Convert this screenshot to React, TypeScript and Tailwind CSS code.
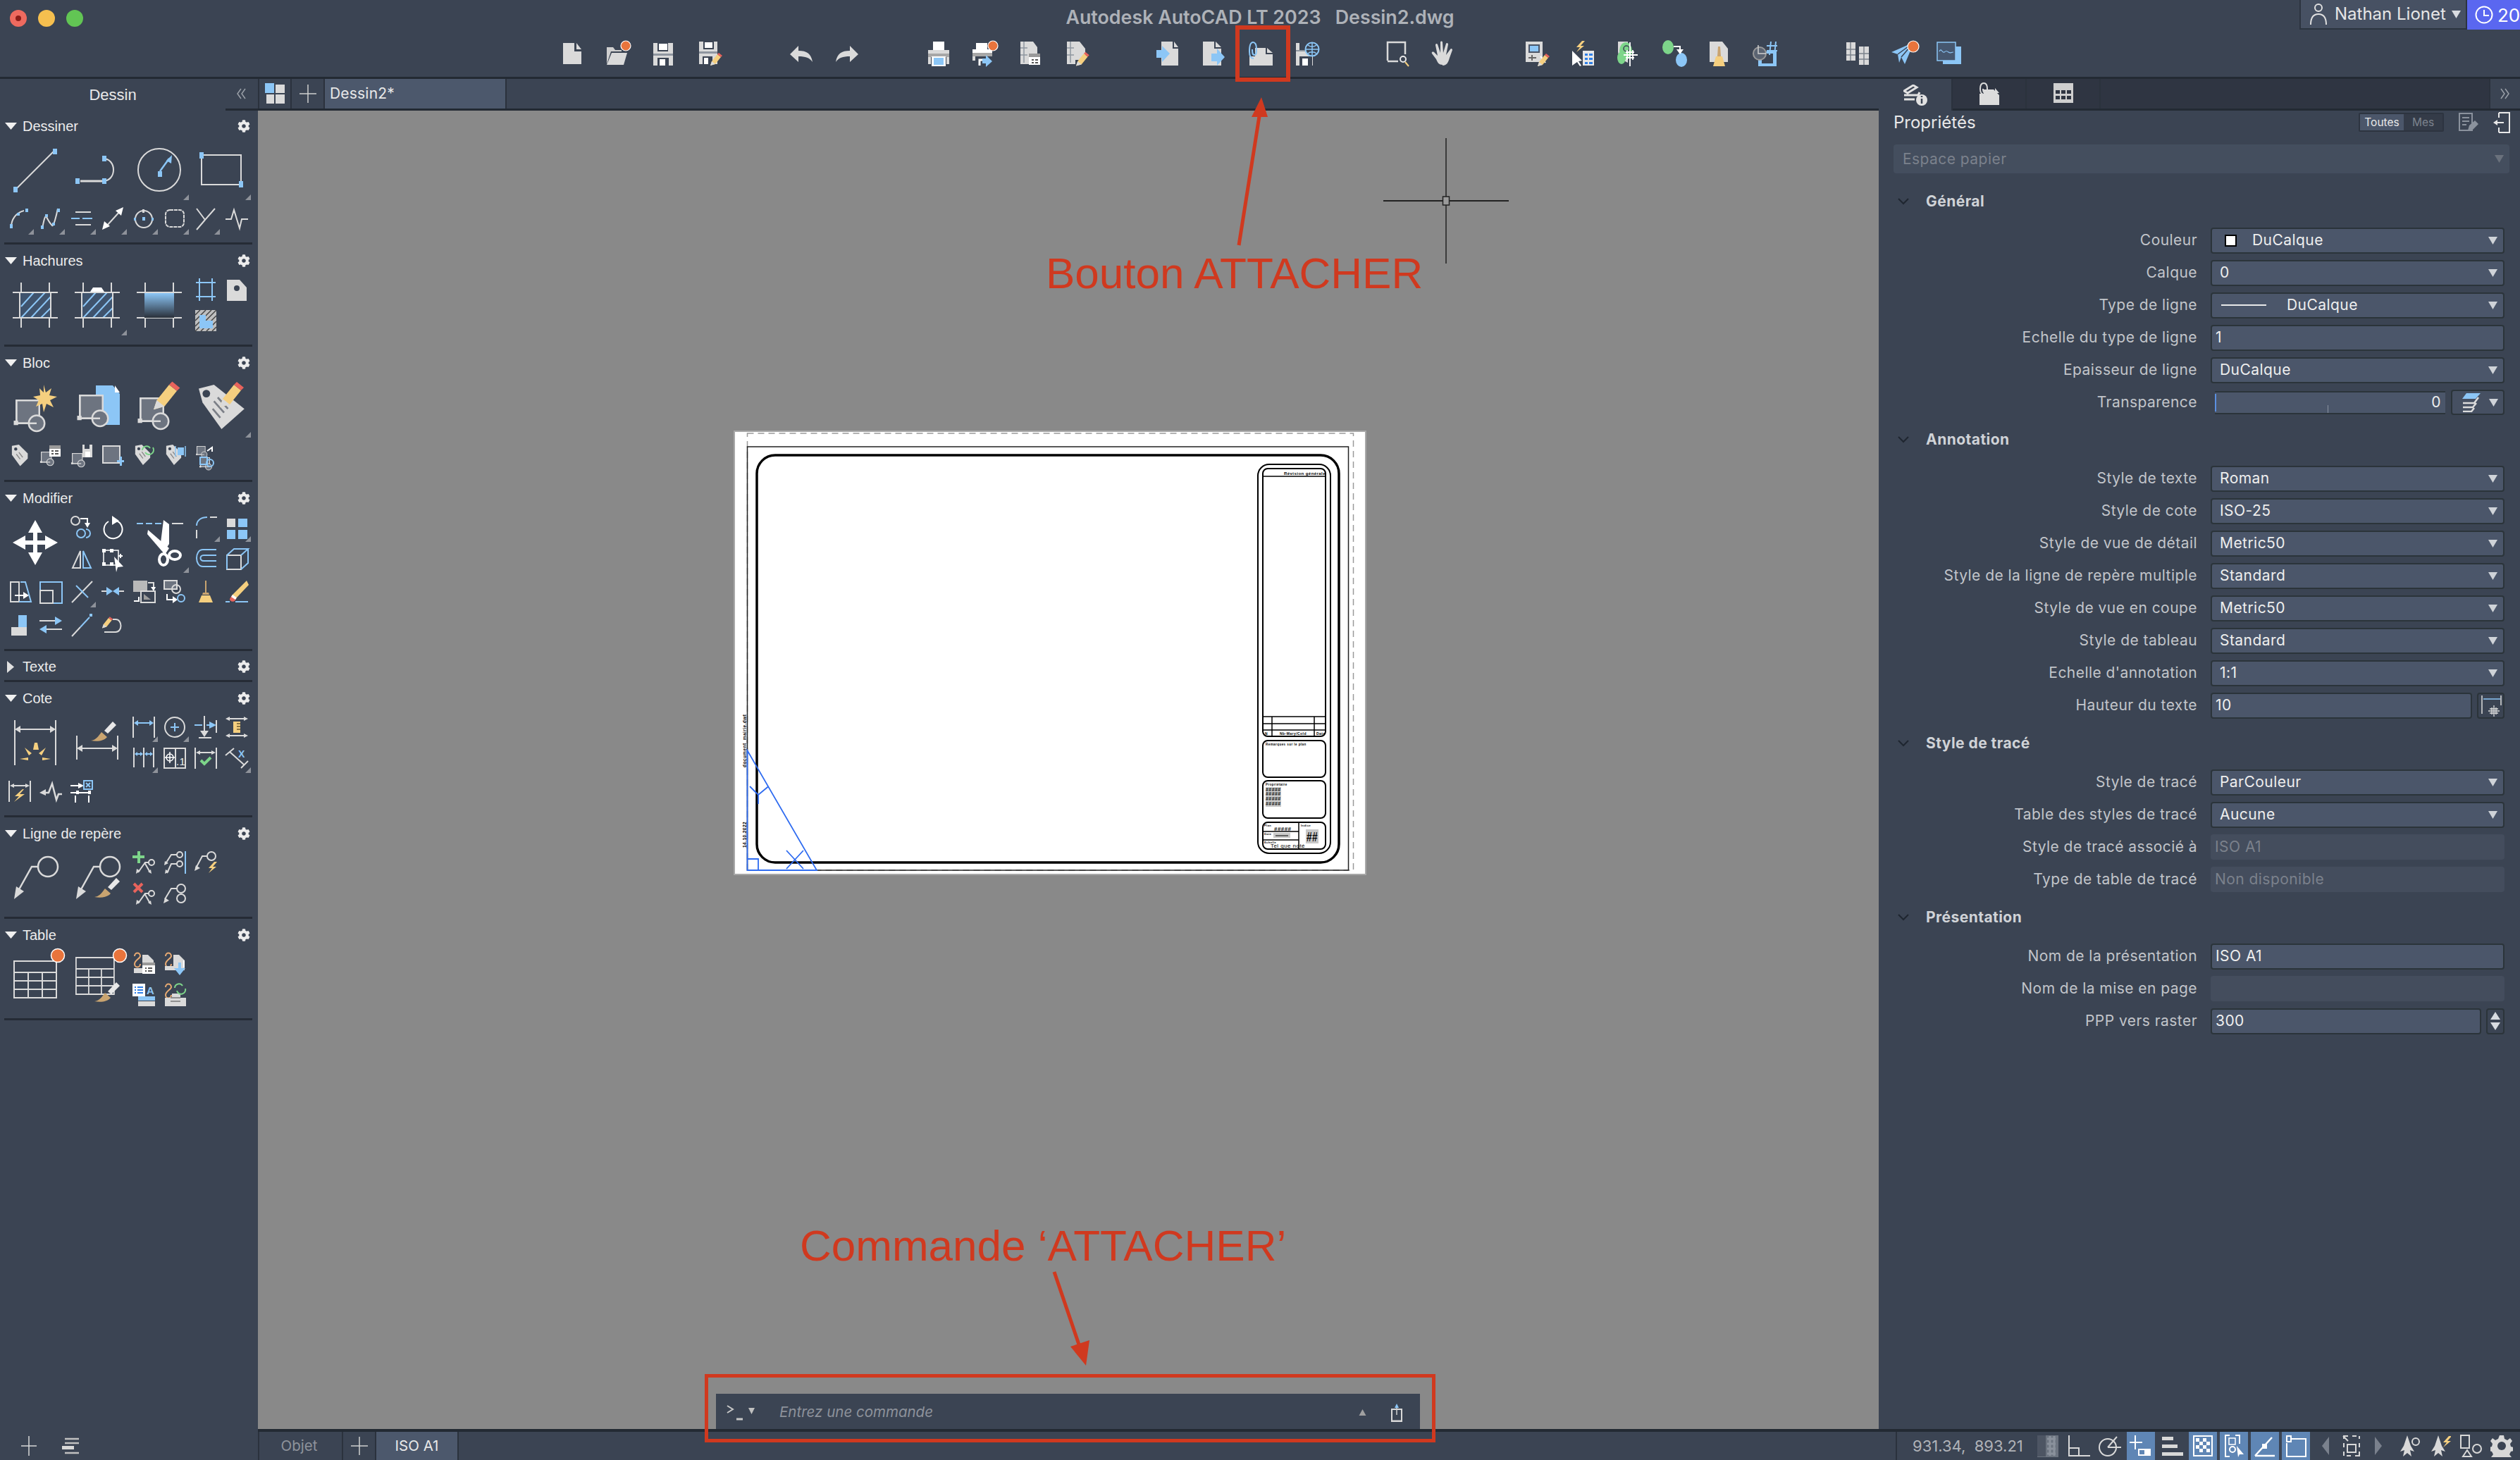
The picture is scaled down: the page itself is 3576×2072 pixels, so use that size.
import React from 'react';
import { FaCog } from 'react-icons/fa';

const G = '#dadada', B = '#8cc6f6', Y = '#f5cf7f', R = '#e8635c', O = '#e8743c', N = '#7dd58a', T = '#c9a470', W = '#ffffff', D = '#6d7480', L = '#2f80e8', BG = '#3b4453';
const p = (d: string, c = G, w = 2) => <path d={d} stroke={c} strokeWidth={w} fill="none" />;
const f = (d: string, c = G) => <path d={d} fill={c} />;
const r = (x: number, y: number, w: number, h: number, c = B) => <rect x={x} y={y} width={w} height={h} fill={c} />;
const c = (x: number, y: number, rad: number, col = G, w = 2) => <circle cx={x} cy={y} r={rad} stroke={col} strokeWidth={w} fill="none" />;
const dot = (x: number, y: number, rad = 6) => <circle cx={x} cy={y} r={rad} fill={O} stroke="#fff" strokeWidth={1.2} />;
const pencil = (x: number, y: number, s = 1) => (
  <g transform={`translate(${x} ${y}) scale(${s})`}>
    <path d="M0 16l2-6L10 0l5 4-8 10z" fill={Y} />
    <path d="M0 16l2-6 5 4z" fill={G} />
    <path d="M10 0l2-2 5 4-2 2z" fill={R} />
  </g>
);
const brush = (x: number, y: number) => (
  <g transform={`translate(${x} ${y})`}>
    <path d="M0 29c8-1 11-7 15-12l8 7c-4 5-13 7-23 5z" fill={T} />
    <path d="M19 15L31 2l5 5-12 12z" fill="#e8e8e8" />
  </g>
);
const bolt = (x: number, y: number, col = Y) => <path transform={`translate(${x} ${y})`} d="M9 0L1 9h5l-5 7 11-9H7l6-7z" fill={col} />;
const tag = (x: number, y: number, s = 1) => (
  <g transform={`translate(${x} ${y}) scale(${s})`}>
    <path d="M1 2L12 0l14 14v8L14 34 1 16z" fill={G} />
    <circle cx="7" cy="7" r="2.500" fill={BG} />
    <path d="M8 15l6 8M12 12l6 8" stroke="#888" strokeWidth="1.500" />
  </g>
);
const blockSq = (x: number, y: number, s = 1) => (
  <g transform={`translate(${x} ${y}) scale(${s})`}>
    <rect x="1" y="1" width="26" height="26" fill="#6d7480" stroke={G} strokeWidth="2" />
    <circle cx="24" cy="27" r="9" fill="#6d7480" stroke={G} strokeWidth="2" />
    <path d="M24 27H1V1" stroke={G} strokeWidth="2" fill="none" />
    <rect x="-2" y="24" width="5" height="5" fill={G} />
  </g>
);
const leader = (x: number, y: number, s = 1) => (
  <g transform={`translate(${x} ${y}) scale(${s})`}>
    <circle cx="48" cy="14" r="14" stroke={G} strokeWidth="2.500" fill="none" />
    <path d="M34 14H25L6 48" stroke={G} strokeWidth="2.500" fill="none" />
    <path d="M0 60l3-18 11 7z" fill={G} />
  </g>
);
const minitbl = (x: number, y: number, sx = 1) => (
  <g transform={`translate(${x} ${y}) scale(${sx} 1)`}>
    <path d="M1 1h60v52H1zM1 17h60M1 29h60M1 41h60M21 17v36M41 17v36" stroke={G} strokeWidth="2" fill="none" />
  </g>
);
const chain = (x: number, y: number) => <path transform={`translate(${x} ${y})`} d="M3 5c0-6 8-6 8 0 0 3-8 6-8 11 0 6 8 6 8 0" stroke="#e8aa72" strokeWidth="2" fill="none" />;

const Ic = ({ s = 32, children }: { s?: number; children: React.ReactNode }) => (
  <svg className="overflow-visible" width={s} height={s} viewBox={`0 0 ${s} ${s}`} fill="none">{children}</svg>
);
const Tb = ({ children }: { children?: React.ReactNode }) => (
  <div className="w-[65.2px] h-[40px] flex items-center justify-center shrink-0">{children ? <Ic s={36}>{children}</Ic> : null}</div>
);

const Tool = ({ big, fly, children }: { big?: boolean; fly?: boolean; children?: React.ReactNode }) => (
  <div className={big ? 'col-span-2 row-span-2 relative flex items-center justify-center' : 'relative flex items-center justify-center'}>
    {children ? <Ic s={big ? 64 : 32}>{children}</Ic> : null}
    {fly ? (
      <svg className="absolute right-[2px] bottom-[1px]" width="8" height="8" viewBox="0 0 8 8"><path d="M8 0v8H0z" fill="#8e929a" /></svg>
    ) : null}
  </div>
);

const Blk = ({ children }: { children: React.ReactNode }) => (
  <div className="grid grid-cols-[repeat(8,44px)] grid-rows-[44px_44px] pl-[6px]">{children}</div>
);
const Rows = ({ children }: { children: React.ReactNode }) => (
  <div className="grid grid-cols-[repeat(8,44px)] auto-rows-[48px] pl-[6px] mt-[1px]">{children}</div>
);

const Section = ({ title, open = true, hd = 'h-[42px]', pb = 'pb-[10px]', children }: { title: string; open?: boolean; hd?: string; pb?: string; children?: React.ReactNode }) => (
  <section className={`${pb} relative shrink-0 border-b-[3px] border-[#252b35] ml-[6px] mr-[8px]`}>
    <div className={`${hd} flex items-center pt-[3px] pl-[1px] pr-[3px] text-[#ececec] text-[20px] tracking-normal font-['Liberation_Sans']`}>
      <span className="w-[25px] flex">
        {open ? (
          <svg width="17" height="10" viewBox="0 0 17 10"><path d="M0 0h17l-8.500 10z" fill="#f0f0f0" /></svg>
        ) : (
          <svg className="ml-[3px]" width="10" height="17" viewBox="0 0 10 17"><path d="M0 0l10 8.500-10 8.500z" fill="#e0e0e0" /></svg>
        )}
      </span>
      <span className="flex-1">{title}</span>
      <FaCog className="text-[#ececec] w-[18px] h-[18px]" />
    </div>
    <div className="-ml-[6px] -mr-[8px]">{children}</div>
  </section>
);

const Caret = ({ c: col = '#cfd3d8' }: { c?: string }) => (
  <svg width="13" height="11" viewBox="0 0 13 11"><path d="M0 0h13L6.500 11z" fill={col} /></svg>
);

const Box = ({ children, cls = 'flex-1', sel }: { children?: React.ReactNode; cls?: string; sel?: boolean }) => (
  <div className={`${cls} h-[37px] flex items-center rounded-[4px] bg-[#4b566a] border-2 border-[#2b343a] text-[#eeeeee] relative`}>
    {children}
    {sel ? <span className="absolute right-[8px] top-[11px] flex"><Caret /></span> : null}
  </div>
);
const Lab = ({ children }: { children: React.ReactNode }) => (
  <div className="w-[471px] pr-[19px] text-right text-[#c2c5ca] shrink-0 whitespace-nowrap">{children}</div>
);
const Row = ({ label, children }: { label: string; children: React.ReactNode }) => (
  <div className="h-[46px] flex items-center pr-[22px]"><Lab>{label}</Lab>{children}</div>
);
const Sel = ({ label, v }: { label: string; v: string }) => (
  <Row label={label}><Box sel><span className="pl-[11px]">{v}</span></Box></Row>
);
const Inp = ({ label, v }: { label: string; v: string }) => (
  <Row label={label}><Box><span className="pl-[5px]">{v}</span></Box></Row>
);
const Dis = ({ label, v }: { label: string; v?: string }) => (
  <Row label={label}>
    <div className="flex-1 h-[36px] flex items-center rounded-[4px] bg-[#444d5d] text-[#7b818c] pl-[6px]">{v}</div>
  </Row>
);
const Head = ({ t, cls = 'mt-[4px]' }: { t: string; cls?: string }) => (
  <div className={`${cls} h-[54px] mb-[5px] flex items-center text-[#d0d3d7] font-bold`}>
    <svg className="ml-[27px] mr-[24px]" width="16" height="10" viewBox="0 0 16 10"><path d="M1 1l7 7 7-7" stroke="#1f2630" strokeWidth="2" fill="none" /></svg>
    {t}
  </div>
);

const St = ({ on, w = 'w-[44px]', children }: { on?: boolean; w?: string; children?: React.ReactNode }) => (
  <div className={`${w} h-[40px] flex items-center justify-center shrink-0`}>
    <div className={on ? 'w-[40px] h-[40px] bg-[#5f86b5] flex items-center justify-center' : 'w-[40px] h-[40px] flex items-center justify-center'}>
      <svg width="32" height="32" viewBox="0 0 32 32" fill="none">{children}</svg>
    </div>
  </div>
);

const F = "Liberation Sans";
const Paper = () => (
  <svg className="absolute left-[677px] top-[456px] shadow-[0_0_0_2px_#a8a8a8]" width="894" height="627" viewBox="0 0 894 627" fill="none">
    <rect width="894" height="627" fill="#ffffff" />
    <rect x="17.500" y="2" width="860" height="620" stroke="#9a9a9a" strokeWidth="1.500" strokeDasharray="9 6" />
    <rect x="17.500" y="21" width="853" height="601" stroke="#222" strokeWidth="1.500" />
    <rect x="31" y="33" width="826" height="578" rx="26" stroke="#000" strokeWidth="3.500" />
    <rect x="742" y="46" width="103" height="552" rx="16" stroke="#000" strokeWidth="2" />
    <rect x="749" y="52" width="89" height="380" rx="7" stroke="#000" strokeWidth="2" />
    <path d="M749 63h89M749 404h89M749 414h89M749 423h89M762 404v28M822 404v28" stroke="#000" strokeWidth="1.500" />
    <text x="779" y="61" fontSize="6" fontWeight="700" fill="#000" fontFamily={F}>Révision générale</text>
    <text x="752" y="430" fontSize="5" fontWeight="700" fill="#000" fontFamily={F}>N</text>
    <text x="773" y="430" fontSize="5" fontWeight="700" fill="#000" fontFamily={F}>Nb-Mary/Cold</text>
    <text x="825" y="430" fontSize="5" fontWeight="700" fill="#000" fontFamily={F}>Date</text>
    <rect x="749" y="438" width="89" height="52" rx="7" stroke="#000" strokeWidth="2" />
    <text x="753" y="445" fontSize="4.500" fontWeight="700" fill="#000" fontFamily={F}>Remarques sur le plan</text>
    <rect x="749" y="495" width="89" height="53" rx="7" stroke="#000" strokeWidth="2" />
    <text x="753" y="502" fontSize="4.500" fontWeight="700" fill="#000" fontFamily={F}>Propriétaire</text>
    <rect x="753" y="504" width="22" height="28" fill="#c8c8c8" />
    <text x="753" y="510" fontSize="7" fontWeight="700" fill="#000" fontFamily={F}>#####</text>
    <text x="753" y="516" fontSize="7" fontWeight="700" fill="#000" fontFamily={F}>#####</text>
    <text x="753" y="523" fontSize="7" fontWeight="700" fill="#000" fontFamily={F}>#####</text>
    <text x="753" y="530" fontSize="7" fontWeight="700" fill="#000" fontFamily={F}>#####</text>
    <rect x="749" y="554" width="89" height="38" rx="7" stroke="#000" strokeWidth="2" />
    <path d="M800 554v38M749 567h51M749 579h51" stroke="#000" strokeWidth="1.500" />
    <text x="751" y="560" fontSize="4" fontWeight="700" fill="#000" fontFamily={F}>Plan</text>
    <text x="765" y="566" fontSize="8" fontWeight="700" fill="#000" fontFamily={F}>#####</text>
    <rect x="764" y="569" width="24" height="7" fill="#c8c8c8" />
    <path d="M767 573h18" stroke="#000" strokeWidth="1" />
    <text x="751" y="572" fontSize="4" fontWeight="700" fill="#000" fontFamily={F}>Date</text>
    <text x="751" y="584" fontSize="4" fontWeight="700" fill="#000" fontFamily={F}>Echelle</text>
    <text x="760" y="590" fontSize="8" fill="#000" fontFamily={F}>Tel que noté</text>
    <text x="803" y="560" fontSize="4" fontWeight="700" fill="#000" fontFamily={F}>Indice</text>
    <rect x="810" y="564" width="18" height="20" fill="#c8c8c8" />
    <text x="811" y="581" fontSize="18" fontWeight="700" fill="#000" fontFamily={F} textLength="16" lengthAdjust="spacingAndGlyphs">##</text>
    <g transform="translate(16 476) rotate(-90)">
      <text x="0" y="0" fontSize="6.500" fontWeight="700" fill="#000" fontFamily={F}>document_mairie.dwt</text>
    </g>
    <g transform="translate(16 590) rotate(-90)">
      <text x="0" y="0" fontSize="6.500" fontWeight="700" fill="#000" fontFamily={F}>14.10.2022</text>
    </g>
    <g stroke="#2e6bf0" strokeWidth="1.800">
      <path d="M17.500 452V622H116Z" />
      <path d="M17.500 606H33V622" />
      <path d="M21 503L33 515L47.500 503M33 515V528" />
      <path d="M73 594L97 620M97 594L73 620" />
    </g>
  </svg>
);

const Cross = () => (
  <div className="absolute left-[1597px] top-[39px] w-[178px] h-[178px] pointer-events-none">
    <svg width="178" height="178" viewBox="0 0 178 178" fill="none">
      <path d="M89 0V178" stroke="#222" strokeWidth="1.500" />
      <path d="M0 89H178" stroke="#222" strokeWidth="2" />
      <rect x="84.500" y="83" width="9" height="12" fill="#9a9a9a" stroke="#222" strokeWidth="1.500" />
    </svg>
  </div>
);

export default function App() {
  return (
    <div className="relative w-[3576px] h-[2072px] overflow-hidden bg-[#3b4453] flex flex-col text-[21px] tracking-[0.45px] font-['Inter','Liberation_Sans',sans-serif]">
      {/* TITLE + TOOLBAR */}
      <header className="h-[112px] shrink-0 border-b-[3px] border-[#232a33]">
        <div className="h-[48px] grid grid-cols-[1fr_auto_1fr]">
          <div className="flex items-start gap-[16px] pl-[14px] pt-[14px]">
            <span className="w-[24px] h-[24px] rounded-full bg-[#ee6a5f] flex items-center justify-center"><span className="w-[8px] h-[8px] rounded-full bg-[#8c1d18]" /></span>
            <span className="w-[24px] h-[24px] rounded-full bg-[#f5bf4f]" />
            <span className="w-[24px] h-[24px] rounded-full bg-[#62c554]" />
          </div>
          <div className="text-[#aeb2b8] text-[26.800px] font-semibold tracking-normal pt-[4px] whitespace-pre">Autodesk AutoCAD LT 2023   Dessin2.dwg</div>
          <div className="flex justify-end items-start">
            <div className="w-[238px] h-[42px] bg-[#475163] border-x-2 border-b-2 border-[#2c3440] flex items-center pl-[12px] text-[#e6e6e6] text-[24px] tracking-normal">
              <svg className="mr-[10px]" width="26" height="32" viewBox="0 0 26 32" fill="none"><circle cx="13" cy="7" r="5" stroke="#e0e0e0" strokeWidth="2" /><path d="M2 31c0-12 5-15 11-15s11 3 11 15" stroke="#e0e0e0" strokeWidth="2" /></svg>
              <span className="flex-1 whitespace-nowrap">Nathan Lionet</span>
              <span className="mr-[7px] flex"><Caret c="#d8dbe0" /></span>
            </div>
            <div className="w-[75px] h-[42px] bg-[#5a67f0] flex items-center pl-[11px] text-white text-[26px] tracking-normal overflow-hidden">
              <svg className="mr-[6px] shrink-0" width="26" height="26" viewBox="0 0 26 26" fill="none"><circle cx="13" cy="13" r="11.500" stroke="#fff" strokeWidth="2" /><path d="M13 6v8h7" stroke="#fff" strokeWidth="2" /></svg>
              20
            </div>
          </div>
        </div>
        <div className="h-[56px] flex items-center pl-[778px]">
          <Tb>{f('M6 3h16v12h10v18H6z')}{f('M25 3l7 9h-7z')}</Tb>
          <Tb>{f('M3 9h9l3 4h9v2H9L3 33z', '#cfcfcf')}{f('M10 17h22l-5 17H3z')}{dot(30, 7, 7)}</Tb>
          <Tb>{f('M4 3h28v32H4z')}{r(10, 3, 15, 12, BG)}{r(4, 18, 28, 3, '#8f96a0')}{r(10, 24, 16, 11, BG)}{r(13, 26, 8, 9, '#fff')}{r(12, 4, 12, 9, '#fff')}</Tb>
          <Tb>{f('M4 1h26v32H4z')}{r(10, 1, 15, 11, BG)}{r(12, 2, 11, 8, '#fff')}{r(4, 15, 26, 3, '#8f96a0')}{r(9, 22, 14, 11, BG)}{r(11, 24, 6, 9, '#fff')}{pencil(20, 19, 1)}</Tb>
          <Tb />
          <Tb>{f('M2 19l12-12v7c12 0 18 4 20 16-4-6-10-8-20-8v8z')}</Tb>
          <Tb>{f('M34 19L22 7v7C10 14 4 18 2 30c4-6 10-8 20-8v8z')}</Tb>
          <Tb />
          <Tb>{r(10, 1, 16, 12, '#fff')}{r(3, 13, 30, 5, G)}{r(3, 18, 30, 5, '#a7a7a7')}{r(3, 23, 4, 10, G)}{r(29, 23, 4, 10, G)}{r(8, 22, 20, 14, '#fff')}{r(11, 24, 14, 10)}</Tb>
          <Tb>{r(6, 3, 16, 9, '#fff')}{r(1, 12, 28, 5, '#fff')}{r(1, 17, 28, 5, '#a7a7a7')}{r(1, 22, 4, 6, G)}{p('M11 35V27h10', W, 3)}{f('M20 20l9 9-9 8v-5h-5v-7h5z', B)}{dot(30, 7, 7)}</Tb>
          <Tb>{f('M4 1h18l6 8v10H16v14H4z')}{p('M9 1v30M4 10h10M4 20h10', '#8f96a0', 1.500)}{r(16, 18, 16, 16, '#fff')}{r(16, 18, 16, 5, '#999')}{r(20, 26, 3, 2, '#555')}{r(25, 26, 4, 2, '#555')}{r(20, 30, 3, 2, '#555')}{r(25, 30, 4, 2, '#555')}</Tb>
          <Tb>{f('M4 1h18l8 10v16H16v6H4z')}{p('M9 1v30M4 10h10M4 20h10', '#8f96a0', 1.500)}{pencil(17, 18, 1.100)}</Tb>
          <Tb />
          <Tb>{f('M8 1h16v10h8v24H8z')}{f('M26 1l6 8h-6z')}{f('M1 13h8V7l11 11-11 12v-6H1z', B)}</Tb>
          <Tb>{f('M2 1h16v10h10v24H2z')}{f('M20 1l8 8h-8z')}{f('M14 18h8v-7l11 12-11 12v-6h-8z', B)}</Tb>
          <Tb>{f('M3 22h8V10h15v9h10v16H3z')}{f('M28 10l8 7h-8z')}{p('M9 25c-5 0-6-4-6-10 0-7 1-13 5-13 4 0 5 4 5 10 0 4 0 8-3 8-3 0-3-4-3-8', B, 2)}</Tb>
          <Tb>{f('M3 3h24v32H3z')}{r(8, 3, 13, 10, BG)}{r(3, 13, 24, 2, '#8f96a0')}{r(8, 22, 18, 13, BG)}{r(12, 25, 8, 10, '#fff')}<circle cx="26" cy="12" r="9.500" fill={BG} stroke={B} strokeWidth="2" />{p('M26 3v18M17 12h18M20 6c3 3 9 3 12 0M20 18c3-3 9-3 12 0', B, 1.500)}</Tb>
          <Tb />
          <Tb>{p('M3 28V2h25v17', G, 2.500)}{p('M3 29h15', G, 2.500)}{c(25, 26, 4, '#e8e8e8', 2)}{p('M28 30l5 6', Y, 2)}</Tb>
          <Tb>{f('M16 34c-5 0-7-3-9-8l-6-8c-1-2 1-3 3-2l5 5L6 6c0-2 2-3 3-1l4 12L13 2c0-2 3-2 3 0l1 15 4-13c1-2 3-1 3 1l-3 15 6-8c1-2 3-1 3 1l-4 11c-2 7-4 11-10 11z', G)}</Tb>
          <Tb />
          <Tb>{f('M3 1h24v29H3z')}{r(7, 5, 16, 12, '#4a5568')}{r(9, 7, 12, 8)}{p('M7 24h11M12 20v8', '#666', 2)}{p('M24 22l7 9', '#fff', 2)}{pencil(20, 20, 1)}</Tb>
          <Tb>{f('M4 14l14 14-5 1 4 6-2 1-4-6-7 5z', '#fff')}{bolt(9, 0)}{r(19, 14, 16, 21, '#e8e8e8')}{r(22, 18, 4, 3, L)}{r(28, 18, 5, 3, L)}{r(22, 24, 4, 3, L)}{r(28, 24, 5, 3, L)}{r(22, 30, 4, 3, L)}{r(28, 30, 5, 3, L)}</Tb>
          <Tb><path d="M4 1h14v30c-8-4-14-8-14-16z" fill={G} /><ellipse cx="15" cy="14" rx="9" ry="12" fill={N} /><ellipse cx="9" cy="24" rx="6" ry="9" fill={N} />{c(16, 11, 4, BG, 1.500)}{p('M21 2v34M12 20h20M15 16h12M15 24h12M17 13v14M25 13v14', '#fff', 1.800)}</Tb>
          <Tb><ellipse cx="10" cy="9" rx="8" ry="10" fill={N} /><ellipse cx="29" cy="27" rx="8" ry="10" fill={B} />{p('M18 8h9v6', '#fff', 2)}{f('M22 12h10l-5 7z', '#fff')}</Tb>
          <Tb>{f('M4 1h18l8 10v19H4z')}{f('M16 8h3l1 14h-5z', T)}{f('M13 22h9l4 14H9z', Y)}</Tb>
          <Tb>{r(8, 15, 26, 21)}{r(13, 18, 16, 14, BG)}<circle cx="10" cy="18" r="9" fill="#5b6472" stroke="#999" strokeWidth="2" />{p('M19 18H8V6', '#d0d0d0', 1.500)}{p('M26 1l-2 19M33 1l-2 19M20 7h15M20 14h15', B, 2)}</Tb>
          <Tb />
          <Tb>{f('M2 2h13v26H2z')}{f('M20 8h14v26H20z')}{p('M8 2v26M2 12h13M2 20h13M27 8v26M20 18h14M20 26h14', '#7c828c', 1.500)}</Tb>
          <Tb>{f('M1 16L33 2 20 33l-5-10-3 8-2-12z', B)}{p('M10 19L33 2M15 23L33 2', BG, 1.500)}{dot(32, 8, 8)}</Tb>
          <Tb>{r(9, 8, 26, 25)}{r(1, 2, 26, 26, '#46576f')}{p('M1 2h26v26H1z', B, 1.500)}{p('M4 15c3-6 4 3 7 1s3-2 6 0 3 0 7 0', B, 1.200)}</Tb>
        </div>
      </header>

      <div className="flex-1 flex min-h-0">
        {/* LEFT PANEL */}
        <aside className="w-[366px] shrink-0 flex flex-col relative">
          <div className="h-[45px] shrink-0 relative flex items-center justify-center pr-[46px] text-[#e8e8e8] text-[22px] tracking-normal font-['Liberation_Sans']">
            <span>Dessin</span>
            <span className="absolute right-[17px] top-[12px] flex">
              <svg width="14" height="18" viewBox="0 0 14 18" fill="none"><path d="M7 2L2 9l5 7M13 2L8 9l5 7" stroke="#9aa0a8" strokeWidth="1.500" /></svg>
            </span>
            <span className="absolute right-0 bottom-0 w-[46px] h-[3px] bg-[#232a33]" />
          </div>

          <Section title="Dessiner" hd="h-[40px]" pb="pb-[10px]">
            <Blk>
              <Tool big>{p('M4 60L58 6')}{r(1, 56, 6, 8)}{r(57, 2, 6, 8)}</Tool>
              <Tool big>{p('M8 48h32', G, 3)}{p('M40 16c20 0 20 32 0 32')}{r(1, 44, 6, 8)}{r(39, 12, 6, 8)}{r(39, 44, 6, 8)}</Tool>
              <Tool big fly>{c(32, 32, 30)}{r(30, 34, 6, 8)}{p('M33 34l13-18', B, 2.500)}{f('M50 11l-1 12-7-4z', B)}</Tool>
              <Tool big fly>{p('M4 11h56v42H4z')}{r(1, 7, 6, 9)}{r(57, 48, 6, 9)}</Tool>
            </Blk>
            <Rows>
              <Tool fly>{p('M4 28C4 18 10 8 22 5', G, 2)}{r(2, 24, 4, 6)}{r(12, 8, 4, 4)}{r(24, 2, 4, 5)}</Tool>
              <Tool fly>{p('M4 30C6 20 8 10 10 14s6 10 8 12 6-14 8-24')}{r(2, 26, 4, 5)}{r(8, 10, 4, 4)}{r(18, 22, 4, 4)}{r(25, 2, 4, 5)}</Tool>
              <Tool fly>{p('M7 7h22', G)}{p('M1 16h12M17 16h14', B)}{p('M7 25h22')}</Tool>
              <Tool fly>{p('M7 27L27 5')}{f('M1 32l3-12 8 7z', '#fff')}{f('M31 0l-3 12-8-7z', '#fff')}</Tool>
              <Tool fly>{c(16, 17, 12)}{r(13, 9, 6, 4, BG)}{r(14, 14, 4, 5, B)}{r(14, 3, 3, 5, G)}{r(2, 15, 3, 4, B)}{r(27, 15, 3, 4, B)}</Tool>
              <Tool fly><rect x="3" y="4" width="26" height="24" rx="6" stroke={G} strokeWidth="2" strokeDasharray="5 1" /></Tool>
              <Tool fly>{p('M3 2l12 16L29 2M15 18L3 32')}</Tool>
              <Tool>{p('M0 17h8l4-13 8 26 3-13h9')}</Tool>
            </Rows>
          </Section>

          <Section title="Hachures" pb="pb-[12px]">
            <Blk>
              <Tool big>{p('M0 14h64M0 50h64M12 0v64M52 0v64')}{r(10, 14, 44, 36, '#3f536d')}{p('M12 34l18-20M12 50L46 14M26 50L54 20M40 50l14-14', B, 2)}{p('M10 14h44v36H10z')}</Tool>
              <Tool big fly>{p('M0 14h64M0 50h64M12 0v64M52 0v64')}{r(10, 14, 44, 36, '#3f536d')}{p('M12 34l18-20M12 50L46 14M26 50L54 20M40 50l14-14', B, 2)}{p('M10 14h44v36H10z')}{f('M22 13l4-6h12l4 6z', '#fff')}</Tool>
              <Tool big>{p('M0 14h64M0 50h64M12 0v64M52 0v64')}<linearGradient id="gr1" x1="0" y1="0" x2="0" y2="1"><stop offset="0" stopColor="#8cc6f6" /><stop offset="1" stopColor="#2a303a" /></linearGradient><rect x="11" y="15" width="42" height="35" fill="url(#gr1)" /></Tool>
              <Tool>{p('M7 0v32M25 0v32M2 6h28M2 26h28', B)}{p('M7 6h18v20H7z', B)}</Tool>
              <Tool>{f('M2 2h18l10 11v19H2z')}<circle cx="16" cy="14" r="4" fill={BG} /></Tool>
              <Tool>{r(1, 1, 30, 30, '#bfbfbf')}{p('M1 8L8 1M1 16L16 1M1 24L24 1M1 31L31 1M9 31L31 9M17 31L31 17M25 31l6-6', '#444', 1.500)}{f('M7 8h9v8h10v11H7z', B)}</Tool>
            </Blk>
          </Section>

          <Section title="Bloc">
            <Blk>
              <Tool big>{blockSq(4, 21, 1.250)}{f('M44 0l3 11 8-6-3 10 11 2-10 5 5 10-10-5-4 12-2-12-9 4 4-9-8-5 10-2-1-10 6 6z', Y)}</Tool>
              <Tool big>{f('M30 1h24l10 12v44H30z', B)}{f('M57 1l7 10h-7z', '#fff')}{blockSq(6, 14, 1.250)}</Tool>
              <Tool big>{blockSq(4, 18, 1.250)}{pencil(24, 0, 2.200)}</Tool>
              <Tool big fly><g transform="scale(1.800)">{f('M0 3L12 0l24 19-18 16L3 14z')}<circle cx="6" cy="7" r="3" fill={BG} />{p('M12 13l8 9M15 10l8 9M11 19l6 7', '#7b7f87', 1.500)}</g>{pencil(30, 0, 2)}</Tool>
            </Blk>
            <Rows>
              <Tool>{tag(4, 0, 0.900)}</Tool>
              <Tool>{blockSq(2, 10, 0.550)}{r(14, 1, 16, 16, '#fff')}{r(14, 1, 16, 5, '#999')}{r(17, 8, 3, 2, '#555')}{r(22, 8, 5, 2, '#555')}{r(17, 12, 3, 2, '#555')}{r(22, 12, 5, 2, '#555')}</Tool>
              <Tool>{blockSq(2, 12, 0.550)}{r(17, 0, 14, 18, G)}{r(20, 0, 7, 6, BG)}{r(21, 10, 7, 8, '#fff')}</Tool>
              <Tool>{r(2, 2, 24, 24, D)}{p('M2 2h24v24H2z')}{f('M22 22h4v-5h3v5h3v3h-3v5h-3v-5h-4z', B)}</Tool>
              <Tool>{tag(3, 0, 0.850)}{p('M14 8a6 6 0 0 1 11-3M29 4a6 6 0 0 1-11 7', N, 2)}</Tool>
              <Tool>{tag(3, 0, 0.850)}{r(20, 4, 9, 11)}{p('M17 2v15M31 2v15', B, 1.500)}</Tool>
              <Tool>{blockSq(3, 2, 0.450)}{p('M18 9l7-5v6', W, 2)}{blockSq(8, 18, 0.500)}{c(22, 26, 5, B)}{p('M8 18h10v10H8z', B)}</Tool>
            </Rows>
          </Section>

          <Section title="Modifier">
            <Blk>
              <Tool big>{f('M32 0l10 18h-7v11h11v-7l18 10-18 10v-7H35v11h7L32 64 22 46h7V35H18v7L0 32l18-10v7h11V18h-7z', W)}</Tool>
              <Tool>{c(7, 7, 6)}{p('M14 4h10v6', W, 2)}{f('M20 10h8l-4 7z', W)}{c(15, 25, 6, B, 2)}{p('M22 19a6 6 0 0 1 0 12', B)}</Tool>
              <Tool>{p('M21 7a13 13 0 1 1-11 1', W, 2)}{f('M15 0l10 7-10 6z', W)}</Tool>
              <Tool big fly>{p('M0 5h9M13 5h9M26 5h9', B)}{p('M50 5h16')}{f('M38 0l8 6v28l-4 6-8-8z', W)}{f('M16 14l30 26-6 9L15 20z', W)}<ellipse cx="38" cy="56" rx="6" ry="8" fill="none" stroke="#fff" strokeWidth="4" /><ellipse cx="54" cy="50" rx="8" ry="6" fill="none" stroke="#fff" strokeWidth="4" /></Tool>
              <Tool fly>{p('M3 32V20')}{p('M3 14C3 6 10 2 18 2', B)}{p('M22 2h10')}</Tool>
              <Tool fly>{r(2, 4, 12, 12, G)}{r(18, 4, 13, 12)}{r(2, 20, 12, 13)}{r(18, 20, 13, 13)}</Tool>
              <Tool>{p('M14 6L3 30h11z')}{p('M18 6l11 24H18z', B)}</Tool>
              <Tool>{p('M3 5h21v21H3z', W, 1.500)}{r(1, 3, 5, 5, W)}{r(12, 3, 5, 5, W)}{r(1, 22, 5, 5, W)}{r(12, 22, 5, 5, W)}{f('M18 14l13 14-8 1-2 7z', W)}{p('M27 10v6M24 13h6', W, 2)}</Tool>
              <Tool>{p('M31 4H12C0 4 0 28 12 28h19M31 12H13c-6 0-6 8 0 8h18', B)}</Tool>
              <Tool>{p('M2 12h20v20H2z')}{p('M2 12l10-9h20l-10 9M32 3v20l-10 9', B)}{p('M2 12v20', B)}</Tool>
            </Blk>
            <Rows>
              <Tool>{p('M3 3h12v28H3z')}{p('M17 3h7l8 28H15', B)}{p('M9 22h15', W)}{f('M21 17l8 5-8 5z', W)}</Tool>
              <Tool>{p('M1 15V3h31v30H20', B)}{p('M1 15h18v18H1z')}</Tool>
              <Tool fly>{p('M2 32L31 2')}{p('M8 8l17 17', B)}</Tool>
              <Tool>{p('M0 16h7M25 16h7')}{f('M7 10l9 6-9 6z', B)}{f('M25 10l-9 6 9 6z', B)}{p('M7 16h3M22 16h3', B)}</Tool>
              <Tool>{r(1, 1, 20, 16, '#b9b9b9')}{p('M22 4h8v6')}{f('M26 10h7l-3 6z', W)}{p('M12 16h20v16H12z')}{f('M16 28V20l10 8z', '#9c9c9c')}{p('M2 30h7v-6', W)}</Tool>
              <Tool>{r(1, 1, 18, 12, D)}{p('M1 1h18v12H1z')}{c(18, 13, 6)}{p('M5 20v8h9', W, 2)}{f('M13 23l7 5-7 5z', W)}{c(25, 26, 5, B)}</Tool>
              <Tool>{f('M15 1h2v18h-2z', T)}{f('M12 18h8l1 3H11z', T)}{f('M10 22h12l4 10H6z', Y)}</Tool>
              <Tool>{f('M30 1l3 6-17 18-7-3z', Y)}{f('M9 22l7 3-3 5c-3 2-7 0-7-3z', R)}{f('M10 21l6 4-2 3-6-4z', W)}{p('M0 31h6M14 31h18', B)}</Tool>
              <Tool>{r(14, 2, 12, 17)}{r(4, 19, 22, 12, G)}</Tool>
              <Tool>{p('M0 10h24')}{f('M22 4l10 6-10 6z', B)}{p('M8 22h24')}{f('M10 16L0 22l10 6z', B)}</Tool>
              <Tool>{p('M2 32l12-13', G)}{p('M14 19L27 5', B)}{r(27, 0, 4, 4)}</Tool>
              <Tool>{pencil(1, 6, 0.900)}{p('M4 26h16c10 0 10-18 0-18h-4')}</Tool>
            </Rows>
          </Section>

          <Section title="Texte" open={false} hd="h-[41px]" pb="pb-0" />

          <Section title="Cote">
            <Blk>
              <Tool big>{p('M3 0v64M61 0v64M6 13h52')}{f('M3 13l8-5v10zM61 13l-8-5v10z')}{f('M31 32h4l2 10h-8z', Y)}{f('M17 39l10 8-4 3zM47 39l-10 8 4 3z', Y)}{f('M10 55l12-2v4zM54 55l-12-2v4z', Y)}</Tool>
              <Tool big>{p('M3 22v34M61 22v34M6 40h52')}{f('M3 40l8-5v10zM61 40l-8-5v10z')}{brush(23, 0)}</Tool>
              <Tool fly>{p('M1 1v30M31 1v30')}{p('M4 10h24', B)}{f('M2 10l6-4v8zM30 10l-6-4v8z', B)}</Tool>
              <Tool fly>{c(16, 16, 14, G, 2)}{p('M16 10v12M10 16h12', B)}</Tool>
              <Tool>{p('M14 0v22M6 31h18M31 6v18')}{p('M0 13h11', B)}{f('M31 13l-10-5v10z', B)}{p('M17 13h6', B)}{f('M14 30l-6-9h12z', G)}</Tool>
              <Tool>{p('M2 4h28M2 28h28')}{f('M0 4l6-3v6zM32 4l-6-3v6zM0 28l6-3v6zM32 28l-6-3v6z')}{r(11, 8, 10, 16, Y)}{p('M16 11h5M16 15h5M16 19h5', '#6b5a2e', 1.500)}</Tool>
              <Tool fly>{p('M2 1v28M16 1v28M30 1v28')}{p('M4 10h10M18 10h10', B)}{f('M3 10l4-3v6zM15 10l-4-3v6zM17 10l4-3v6zM29 10l-4-3v6z', B)}</Tool>
              <Tool>{p('M1 2h30v28H1zM17 2v28')}{c(9, 15, 5, W, 1.500)}{p('M9 7v16M2 15h14', W, 1.500)}<text x="18" y="26" fontSize="15" fill="#eee" fontFamily="Liberation Sans">.1</text></Tool>
              <Tool>{p('M1 1v30M31 1v30M4 8h24')}{f('M2 8l6-3v6zM30 8l-6-3v6z')}{p('M9 19l5 5 9-9', N, 4)}</Tool>
              <Tool fly>{p('M0 12L12 2M22 30L32 20M6 7l20 18')}<text x="18" y="15" fontSize="14" fontWeight="700" fill={B} fontFamily="Liberation Sans">X</text></Tool>
            </Blk>
            <Rows>
              <Tool>{p('M1 1v30M31 1v30M4 8h24')}{f('M2 8l6-3v6zM30 8l-6-3v6z')}{f('M20 13l-11 10h6l-7 8 15-11h-7l6-7z', Y)}</Tool>
              <Tool>{f('M0 18l9-5v9z')}{p('M8 18h5l5-13 6 23 3-8h5', G, 2.500)}</Tool>
              <Tool>{p('M0 8h12', W)}{f('M11 4l8 4-8 4z', W)}{p('M19 1h12v12H19z', B)}{p('M22 4l6 6M28 4l-6 6', B)}{p('M0 18h8M12 18h14', W, 2)}{r(8, 15, 4, 5, W)}{r(25, 15, 4, 5, W)}{p('M7 22v10', W)}{p('M26 22v10', W)}</Tool>
            </Rows>
          </Section>

          <Section title="Ligne de repère" pb="pb-[11px]">
            <Blk>
              <Tool big>{leader(2, 2)}</Tool>
              <Tool big>{leader(2, 2)}{brush(28, 30)}</Tool>
              <Tool>{f('M7 0h4v6h6v4h-6v7H7v-7H0V6h7z', N)}{c(27, 16, 4)}{p('M23 16h-5L8 30M17 16l8 14')}{f('M5 32l1-7 5 3zM27 32l-5-3 4-3z')}</Tool>
              <Tool>{c(23, 5, 4)}{c(23, 18, 4)}{p('M19 5h-8L4 16M19 18h-8L5 31')}{f('M1 20l1-6 5 3zM2 32l1-6 5 3z')}{p('M31 0v32', B)}</Tool>
              <Tool>{c(24, 7, 6)}{p('M18 7h-7L2 24')}{f('M0 28l2-8 6 4z')}{bolt(19, 15)}</Tool>
              <div />
              <Tool>{p('M2 2l12 12M14 2L2 14', R, 4)}{c(27, 16, 4)}{p('M23 16h-5L8 30M17 16l8 14')}{f('M5 32l1-7 5 3zM27 32l-5-3 4-3z')}</Tool>
              <Tool>{c(25, 9, 6)}{c(25, 23, 6)}{p('M19 9h-8L2 24')}{f('M0 30l2-8 6 4z')}</Tool>
            </Blk>
          </Section>

          <Section title="Table" pb="pb-[11px]">
            <Blk>
              <Tool big>{minitbl(1, 5)}<circle cx="64" cy="-2" r="9.500" fill={O} stroke="#fff" strokeWidth="1.500" /></Tool>
              <Tool big>{minitbl(1, 0, 0.900)}{brush(28, 34)}<circle cx="64" cy="-2" r="9.500" fill={O} stroke="#fff" strokeWidth="1.500" /></Tool>
              <Tool>{chain(0, 0)}{f('M14 3h8l8 8v18H2V22h12z')}{r(14, 14, 18, 16, '#fff')}{r(14, 14, 18, 4, '#999')}{r(18, 21, 2, 2, '#555')}{r(22, 21, 6, 2, '#555')}{r(18, 25, 2, 2, '#555')}{r(22, 25, 6, 2, '#555')}</Tool>
              <Tool>{chain(0, 0)}{f('M14 3h8l8 8v14H2v-6h12z')}{r(21, 14, 4, 8, B)}{f('M15 22h16l-8 10z', B)}{p('M29 11v10', W)}</Tool>
              <div /><div />
              <Tool>{r(0, 0, 18, 18, '#fff')}{r(3, 4, 2, 2, L)}{r(7, 4, 8, 2, L)}{r(3, 8, 2, 2, L)}{r(7, 8, 8, 2, L)}{r(3, 12, 2, 2, L)}{r(7, 12, 8, 2, L)}<text x="20" y="15" fontSize="15" fontWeight="700" fill={B} fontFamily="Liberation Sans">A</text>{r(8, 18, 24, 6)}{r(8, 25, 24, 7, G)}</Tool>
              <Tool>{chain(0, 0)}{f('M6 20h6v-6h12v6h8v12H2v-12z')}{p('M10 20h14M10 25h14', '#8f8f8f', 2)}{p('M16 6a6 6 0 0 1 11-3M31 7a6 6 0 0 1-12 3', N, 2)}</Tool>
            </Blk>
          </Section>

          <div className="flex-1" />
          <div className="h-[40px] shrink-0 flex items-center pl-[30px] gap-[34px]">
            <svg width="22" height="28" viewBox="0 0 22 28" fill="none"><path d="M11 0v28M0 14h22" stroke="#d8d8d8" strokeWidth="1.500" /></svg>
            <svg width="26" height="24" viewBox="0 0 26 24" fill="none"><path d="M6 2h20M6 8h20M6 22h20" stroke="#c0c0c0" strokeWidth="2.500" /><rect x="2" y="12" width="17" height="5" fill="#d8d8d8" /></svg>
          </div>
        </aside>

        {/* CENTER + RIGHT + STATUS */}
        <div className="flex-1 min-w-0 flex flex-col">
          <div className="flex-1 flex min-h-0">
            <main className="w-[2300px] shrink-0 flex flex-col">
              <div className="h-[45px] shrink-0 flex border-b-[3px] border-[#232a33]">
                <div className="w-[48px] border-x-2 border-[#2b323d] flex items-center justify-center">
                  <svg width="28" height="30" viewBox="0 0 28 30"><rect width="13" height="14" fill={B} /><rect x="15" y="2" width="13" height="12" fill={G} /><rect x="2" y="16" width="11" height="13" fill={G} /><rect x="15" y="16" width="13" height="13" fill={G} /></svg>
                </div>
                <div className="w-[47px] border-r-2 border-[#2b323d] flex items-center justify-center">
                  <svg width="24" height="26" viewBox="0 0 24 26" fill="none"><path d="M12 0v26M0 13h24" stroke="#d0d0d0" strokeWidth="1.500" /></svg>
                </div>
                <div className="w-[258px] bg-[#4c586c] border-r-2 border-[#2b323d] flex items-center pl-[7px] text-[#e8e8e8] text-[21px] pb-[1px] tracking-[0.2px]">Dessin2*</div>
              </div>
              <div className="flex-1 relative bg-[#898989] min-h-0">
                <Paper />
                <Cross />
                <div className="absolute left-[650px] bottom-0 w-[999px] h-[50px] bg-[#3b4453] flex items-center pl-[14px] pr-[21px] pt-[3px] text-[#8d929b] text-[20.500px] italic tracking-normal">
                  <svg className="mr-[34px]" width="42" height="26" viewBox="0 0 42 26" fill="none"><path d="M2 3l8 5-8 5" stroke="#c8c8c8" strokeWidth="2" /><path d="M15 22h9" stroke="#c8c8c8" strokeWidth="3" /><path d="M32 6h9l-4.500 9z" fill="#c0c0c0" /></svg>
                  <span className="flex-1">Entrez une commande</span>
                  <svg className="mr-[31px]" width="11" height="11" viewBox="0 0 11 11"><path d="M5.500 1l5 9H.5z" fill="#a0a0a0" /></svg>
                  <svg width="24" height="26" viewBox="0 0 24 26" fill="none"><path d="M5 8h14v17H5z" stroke="#d8d8d8" strokeWidth="2" /><path d="M12 4v12" stroke="#d0d0d0" strokeWidth="1.500" /><path d="M12 0l3 6H9z" fill={B} /><path d="M4 25h16" stroke="#d8d8d8" strokeWidth="3" /></svg>
                </div>
              </div>
            </main>

            <aside className="flex-1 min-w-0 flex flex-col">
              <div className="h-[45px] shrink-0 flex bg-[#2f3542] border-b-[3px] border-[#232a33] relative">
                <div className="w-[105px] h-[45px] bg-[#3b4453] border-r-2 border-[#2b323d] flex items-center justify-center">
                  <svg width="34" height="30" viewBox="0 0 34 30" fill="none"><path d="M1 9L14 1l5 3L6 12zM1 15h20l2-4M1 21h15" stroke="#e2e2e2" strokeWidth="3" /><circle cx="26" cy="22" r="8" fill="#e2e2e2" /><path d="M26 20v7M26 16v2" stroke="#3b4453" strokeWidth="2.500" /></svg>
                </div>
                <div className="w-[105px] border-r-2 border-[#2b323d] flex items-center justify-center">
                  <svg width="32" height="32" viewBox="0 0 32 32" fill="none"><path d="M2 16h6V10h14l8 8v14H2z" fill="#dcdcdc" /><path d="M24 8l6 7h-6z" fill="#dcdcdc" /><path d="M9 17c-5 0-6-3-6-8s1-8 5-8 5 3 5 8c0 3-1 6-3 6s-3-3-3-6" stroke="#dcdcdc" strokeWidth="2" /></svg>
                </div>
                <div className="w-[105px] border-r-2 border-[#2b323d] flex items-center justify-center">
                  <svg width="28" height="30" viewBox="0 0 28 30" fill="none"><rect width="28" height="28" fill="#cfcfcf" /><path d="M3 10h6v5H3zM11 10h6v5h-6zM19 10h6v5h-6zM3 18h6v5H3zM11 18h6v5h-6zM19 18h6v5h-6z" fill="#2f3542" /></svg>
                </div>
                <div className="flex-1" />
                <div className="w-[44px] bg-[#3b4453] border-l-2 border-[#2b323d] flex items-center justify-center">
                  <svg width="14" height="18" viewBox="0 0 14 18" fill="none"><path d="M1 2l5 7-5 7M7 2l5 7-5 7" stroke="#9aa0a8" strokeWidth="1.500" /></svg>
                </div>
              </div>

              <div className="h-[33px] shrink-0 flex items-center pl-[21px] pr-[14px]">
                <span className="flex-1 text-[#e8e8e8] text-[24px] tracking-normal">Propriétés</span>
                <div className="w-[121px] h-[27px] flex rounded-[2px] bg-[#343b48] border-2 border-[#2d3440] text-[15.500px] tracking-normal mr-[20px]">
                  <span className="w-[62px] bg-[#4b566a] flex items-center justify-center text-[#e8e8e8]">Toutes</span>
                  <span className="flex-1 flex items-center justify-center text-[#7d838e]">Mes</span>
                </div>
                <svg className="mr-[20px]" width="30" height="30" viewBox="0 0 30 30" fill="none"><path d="M2 2h18v24H2z" stroke="#8b929d" strokeWidth="2" /><path d="M6 8h10M6 13h10M6 18h6" stroke="#8b929d" strokeWidth="2" /><path d="M14 26l2-7 8-7 5 5-8 8z" fill="#8b929d" /></svg>
                <svg width="24" height="30" viewBox="0 0 24 30" fill="none"><path d="M8 1h15v28H8M8 1v7M8 22v7" stroke="#e8e8e8" strokeWidth="2" /><path d="M4 15h11" stroke="#e8e8e8" strokeWidth="2" /><path d="M0 15l6-4v8z" fill="#e8e8e8" /></svg>
              </div>

              <div className="mt-[15px] ml-[21px] mr-[15px] h-[41px] shrink-0 bg-[#444e5e] rounded-[4px] flex items-center pl-[13px] pr-[8px] text-[#7b818c]">
                <span className="flex-1">Espace papier</span>
                <Caret c="#6a717c" />
              </div>

              <div className="mt-[13px]">
                <Head t="Général" cls="" />
                <Row label="Couleur"><Box sel><span className="ml-[18px] mr-[22px] w-[17px] h-[17px] bg-white border-2 border-black" />DuCalque</Box></Row>
                <Sel label="Calque" v="0" />
                <Row label="Type de ligne"><Box sel><span className="ml-[13px] mr-[29px] w-[64px] h-[2px] bg-[#e8e8e8]" />DuCalque</Box></Row>
                <Inp label="Echelle du type de ligne" v="1" />
                <Sel label="Epaisseur de ligne" v="DuCalque" />
                <Row label="Transparence">
                  <div className="w-[327px] ml-[6px] h-[33px] flex items-center justify-end relative bg-[#4b566a] border-y-2 border-[#2b343a] pr-[6px] text-[#eeeeee]">
                    <span className="absolute left-0 top-[2px] w-[2px] h-[25px] bg-[#5b8fe0]" />
                    <span className="absolute left-[160px] bottom-0 w-[1px] h-[11px] bg-[#8a92a0]" />
                    0
                  </div>
                  <div className="ml-[8px] flex-1 h-[36px] rounded-[4px] border-2 border-[#2b343a] bg-[#465062] flex items-center pl-[14px] gap-[12px]">
                    <svg width="26" height="28" viewBox="0 0 26 28" fill="none"><path d="M6 1h20l-7 8H0z" fill={B} /><path d="M1 15h16l6-8M1 21h14l5-6M1 27h12l4-5" stroke="#dcdcdc" strokeWidth="2.500" /></svg>
                    <Caret />
                  </div>
                </Row>
              </div>

              <Head t="Annotation" cls="mt-[3px]" />
              <Sel label="Style de texte" v="Roman" />
              <Sel label="Style de cote" v="ISO-25" />
              <Sel label="Style de vue de détail" v="Metric50" />
              <Sel label="Style de la ligne de repère multiple" v="Standard" />
              <Sel label="Style de vue en coupe" v="Metric50" />
              <Sel label="Style de tableau" v="Standard" />
              <Sel label="Echelle d'annotation" v="1:1" />
              <Row label="Hauteur du texte">
                <Box><span className="pl-[5px]">10</span></Box>
                <div className="ml-[7px] w-[39px] h-[37px] rounded-[4px] border-2 border-[#2b343a] flex items-center justify-center">
                  <svg width="32" height="32" viewBox="0 0 32 32" fill="none"><path d="M3 2v26M30 2v14" stroke="#dcdcdc" strokeWidth="1.500" /><path d="M5 7h24" stroke={B} strokeWidth="1.500" /><path d="M20 16v16M12 24h16M14 21h12M14 27h12M17 19v10M23 19v10" stroke="#dcdcdc" strokeWidth="1.300" /></svg>
                </div>
              </Row>

              <Head t="Style de tracé" />
              <Sel label="Style de tracé" v="ParCouleur" />
              <Sel label="Table des styles de tracé" v="Aucune" />
              <Dis label="Style de tracé associé à" v="ISO A1" />
              <Dis label="Type de table de tracé" v="Non disponible" />

              <Head t="Présentation" />
              <Inp label="Nom de la présentation" v="ISO A1" />
              <Dis label="Nom de la mise en page" />
              <Row label="PPP vers raster">
                <Box><span className="pl-[5px]">300</span></Box>
                <div className="ml-[7px] w-[26px] h-[37px] rounded-[4px] border-2 border-[#2b343a] flex flex-col items-center justify-center gap-[4px]">
                  <svg width="14" height="11" viewBox="0 0 14 11"><path d="M7 0l7 11H0z" fill="#d8dbe0" /></svg>
                  <svg width="14" height="11" viewBox="0 0 14 11"><path d="M0 0h14L7 11z" fill="#d8dbe0" /></svg>
                </div>
              </Row>
            </aside>
          </div>

          {/* STATUS BAR */}
          <footer className="h-[44px] shrink-0 border-t-[4px] border-[#232a33] flex items-stretch">
            <div className="w-[121px] border-l-2 border-r-2 border-[#2b323d] flex items-center justify-center pr-[4px] text-[#8e939b] text-[20.500px] tracking-normal">Objet</div>
            <div className="w-[47px] border-r-2 border-[#2b323d] flex items-center justify-center">
              <svg width="24" height="26" viewBox="0 0 24 26" fill="none"><path d="M12 0v26M0 13h24" stroke="#d0d0d0" strokeWidth="1.500" /></svg>
            </div>
            <div className="w-[117px] bg-[#4c586c] border-r-2 border-[#2b323d] flex items-center justify-center text-[#e8e8e8] text-[20.500px] tracking-normal">ISO A1</div>
            <div className="flex-1" />
            <div className="w-[886px] border-l-2 border-[#2b323d] flex items-center pl-[22px]">
              <span className="w-[170px] text-[#b0b3b8] text-[22px] tracking-normal whitespace-pre">931.34,  893.21</span>
              <St>{r(1, 1, 30, 31, '#6c7480')}{f('M1 1l12 0v30H1z', '#4d5563')}{p('M15 6h12M15 13h12M15 20h12M15 27h12M19 2v28M25 2v28', '#8a919c', 3)}</St>
              <St>{p('M2 1v29h30M2 19h14v11', '#d8d8d8', 2)}</St>
              <St>{c(13, 18, 12)}{p('M13 18h19M13 18L26 3', '#d8d8d8', 2)}</St>
              <St on>{p('M8 1v20M0 11h18', '#fff', 2)}{r(12, 20, 18, 10, '#fff')}{r(14, 22, 7, 6, '#5f86b5')}</St>
              <St>{r(2, 3, 30, 5, '#d8d8d8')}{r(2, 14, 30, 5, '#d8d8d8')}{r(2, 25, 30, 5, '#d8d8d8')}{r(18, 3, 14, 5, BG)}{r(24, 14, 8, 5, BG)}</St>
              <St on>{p('M3 2h26v28H3z', '#fff', 2)}<path d="M6 5h5v5H6zM16 5h5v5h-5zM11 10h5v5h-5zM21 10h5v5h-5zM6 15h5v5H6zM16 15h5v5h-5zM11 20h5v5h-5zM21 20h5v5h-5z" fill="#fff" /></St>
              <St on>{p('M10 1H4v30h6M18 1h6v12', '#fff', 2)}{p('M9 5h9v9H9z', '#fff', 1.500)}{c(14, 21, 4, '#fff', 2)}{f('M20 16l10 12-6 0-2 4z', '#fff')}</St>
              <St on>{p('M2 30h28M2 30L26 4', '#fff', 2.500)}{r(12, 13, 7, 7, '#fff')}</St>
              <St on>{p('M10 6h20v25H3V12', '#fff', 2)}{p('M3 2h6v8H3z', '#fff', 2)}</St>
              <St w="w-[38px]">{f('M22 3v26L12 16z', '#7a818d')}</St>
              <St w="w-[38px]">{p('M5 30v-6M5 18v-6M5 6V2h6M17 2h6M27 2v4M27 12v6M27 24v6h-6M15 30h-6', '#d8d8d8', 2)}{p('M10 14h12v11H10z', '#d8d8d8', 2)}{p('M4 2l7 7', '#d8d8d8', 2)}</St>
              <St w="w-[40px]">{f('M10 3v26l10-13z', '#7a818d')}</St>
              <St>{f('M14 1l5 15 5 8-6-2 2 9-6-5-6 5 2-9-6 2 5-8z', '#d8d8d8')}{c(26, 10, 5, '#d8d8d8', 2)}</St>
              <St>{f('M14 1l5 15 5 8-6-2 2 9-6-5-6 5 2-9-6 2 5-8z', '#d8d8d8')}{bolt(20, 2)}</St>
              <St>{p('M2 1h12v18H2z', '#d8d8d8', 2)}{c(25, 20, 6, '#d8d8d8', 2)}{p('M11 22l6 9H5z', '#d8d8d8', 2)}</St>
              <St><path d="M13 1h6l1 5 4 2 4-3 3 4-3 4 1 4 4 1v5l-4 1-2 4 3 4-3 3-4-3-4 2-1 4h-5l-1-4-4-2-4 3-3-3 3-4-2-4-4-1v-5l4-1 1-4-3-4 3-4 4 3 4-2z" fill="#d8d8d8" /><circle cx="16" cy="16" r="6" fill={BG} /></St>
            </div>
          </footer>
        </div>
      </div>

      {/* ANNOTATIONS OVER THE SCREENSHOT */}
      <div className="absolute left-[1753px] top-[36px] w-[78px] h-[80px] border-[6px] border-[#d0391f] pointer-events-none" />
      <div className="absolute left-[1000px] top-[1950px] w-[1037px] h-[97px] border-[5px] border-[#d0391f] pointer-events-none" />
      <svg className="absolute left-0 top-0 pointer-events-none" width="3576" height="2072" fill="none">
        <path d="M1758 348L1787 165" stroke="#d0391f" strokeWidth="5" />
        <path d="M1790 138L1776 166L1799 166Z" fill="#d0391f" />
        <path d="M1496 1805L1531 1908" stroke="#d0391f" strokeWidth="5" />
        <path d="M1541 1938L1519 1911L1546 1902Z" fill="#d0391f" />
      </svg>
      <div className="absolute left-[1484px] top-[352px] text-[#d0391f] text-[62px] leading-[72px] tracking-normal font-['Liberation_Sans'] whitespace-nowrap">Bouton ATTACHER</div>
      <div className="absolute left-[1135px] top-[1732px] text-[#d0391f] text-[62px] leading-[72px] tracking-normal font-['Liberation_Sans'] whitespace-nowrap">Commande ‘ATTACHER’</div>
    </div>
  );
}
